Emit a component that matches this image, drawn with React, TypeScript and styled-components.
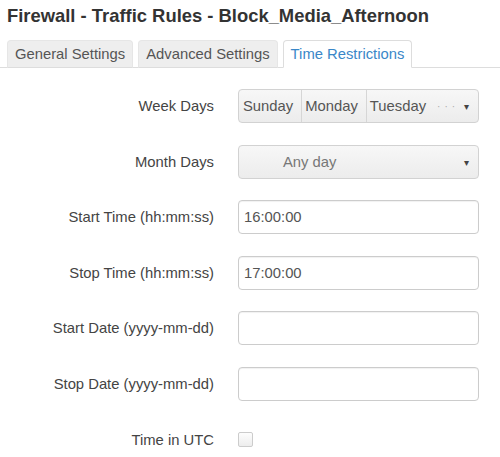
import styled, { createGlobalStyle } from "styled-components";

const GlobalStyle = createGlobalStyle`
  html, body {
    margin: 0;
    padding: 0;
    background: #fff;
  }
  body {
    font-family: "Liberation Sans", Arial, sans-serif;
    font-size: 14.8px;
    color: #333;
  }
`;

type FieldRow =
  | { label: string; kind: "text"; value: string }
  | { label: string; kind: "checkbox" };

const rows: FieldRow[] = [
  { label: "Start Time (hh:mm:ss)", kind: "text", value: "16:00:00" },
  { label: "Stop Time (hh:mm:ss)", kind: "text", value: "17:00:00" },
  { label: "Start Date (yyyy-mm-dd)", kind: "text", value: "" },
  { label: "Stop Date (yyyy-mm-dd)", kind: "text", value: "" },
  { label: "Time in UTC", kind: "checkbox" },
];

const weekDays = ["Sunday", "Monday", "Tuesday"];

const App: React.FC = () => {
  return (
    <Page>
      <GlobalStyle />
      <Title>Firewall - Traffic Rules - Block_Media_Afternoon</Title>

      <TabBar>
        <Tab>General Settings</Tab>
        <Tab>Advanced Settings</Tab>
        <Tab $active>Time Restrictions</Tab>
      </TabBar>

      <Form>
        <Label>Week Days</Label>
        <Select>
          <Chips>
            {weekDays.map((day) => (
              <Chip key={day}>{day}</Chip>
            ))}
          </Chips>
          <More>···</More>
          <Caret>▾</Caret>
        </Select>

        <Label>Month Days</Label>
        <Select>
          <Placeholder>Any day</Placeholder>
          <Caret>▾</Caret>
        </Select>

        {rows.map((row) => (
          <Row key={row.label}>
            <Label>{row.label}</Label>
            {row.kind === "text" ? (
              <TextInput readOnly value={row.value} />
            ) : (
              <CheckCell>
                <CheckBox />
              </CheckCell>
            )}
          </Row>
        ))}
      </Form>
    </Page>
  );
};

const Page = styled.div`
  width: 500px;
  height: 457px;
  overflow: hidden;
  padding-top: 5px;
  box-sizing: border-box;
`;

const Title = styled.h2`
  margin: 0 0 0 7px;
  font-size: 18.4px;
  line-height: 22px;
  font-weight: bold;
  color: #333;
`;

const TabBar = styled.div`
  display: flex;
  gap: 5px;
  margin-top: 13px;
  padding-left: 7px;
  border-bottom: 1px solid #ddd;
  height: 27px;
`;

const Tab = styled.div<{ $active?: boolean }>`
  display: flex;
  align-items: center;
  padding: 0 7px;
  height: 28px;
  margin-bottom: -1px;
  box-sizing: border-box;
  border: 1px solid ${({ $active }) => ($active ? "#ddd" : "#e6e6e6")};
  border-bottom-color: ${({ $active }) => ($active ? "#fff" : "#ddd")};
  border-radius: 4px 4px 0 0;
  background: ${({ $active }) => ($active ? "#fff" : "#eee")};
  color: ${({ $active }) => ($active ? "#3a87c8" : "#555")};
`;

const Form = styled.div`
  display: grid;
  grid-template-columns: 214px 241px;
  grid-auto-rows: 34px;
  column-gap: 24px;
  row-gap: 21.6px;
  margin-top: 21px;
  align-items: center;
`;

const Row = styled.div`
  display: contents;
`;

const Label = styled.div`
  text-align: right;
  color: #444;
`;

const Select = styled.div`
  position: relative;
  display: flex;
  align-items: center;
  height: 34px;
  box-sizing: border-box;
  border: 1px solid #d2d2d2;
  border-radius: 4px;
  background: linear-gradient(#f7f7f7, #ececec);
  padding: 0 26px 0 4px;
  color: #555;
`;

const Chips = styled.div`
  display: flex;
  align-items: center;
  height: 100%;
`;

const Chip = styled.span`
  display: flex;
  align-items: center;
  height: 100%;
  padding: 0 8px 0 3px;
  border-right: 1px solid #d6d6d6;
  &:first-child {
    padding-left: 0;
  }
  &:last-child {
    border-right: none;
  }
`;

const More = styled.span`
  margin-left: 3px;
  color: #aaa;
  font-size: 10px;
  letter-spacing: 4px;
`;

const Placeholder = styled.span`
  color: #777;
  padding-left: 40px;
`;

const Caret = styled.span`
  position: absolute;
  right: 9px;
  top: 50%;
  transform: translateY(-50%);
  font-size: 10px;
  color: #444;
`;

const TextInput = styled.input`
  height: 34px;
  box-sizing: border-box;
  width: 100%;
  border: 1px solid #ccc;
  border-radius: 4px;
  box-shadow: inset 0 1px 1px rgba(0, 0, 0, 0.06);
  padding: 0 5px;
  font-family: "Liberation Sans", Arial, sans-serif;
  font-size: 14.8px;
  color: #555;
  outline: none;
`;

const CheckCell = styled.div`
  display: flex;
  align-items: center;
`;

const CheckBox = styled.span`
  width: 15px;
  height: 15px;
  box-sizing: border-box;
  border: 1px solid #ccc;
  border-radius: 2px;
  background: linear-gradient(#fdfdfd, #ededed);
`;

export default App;
